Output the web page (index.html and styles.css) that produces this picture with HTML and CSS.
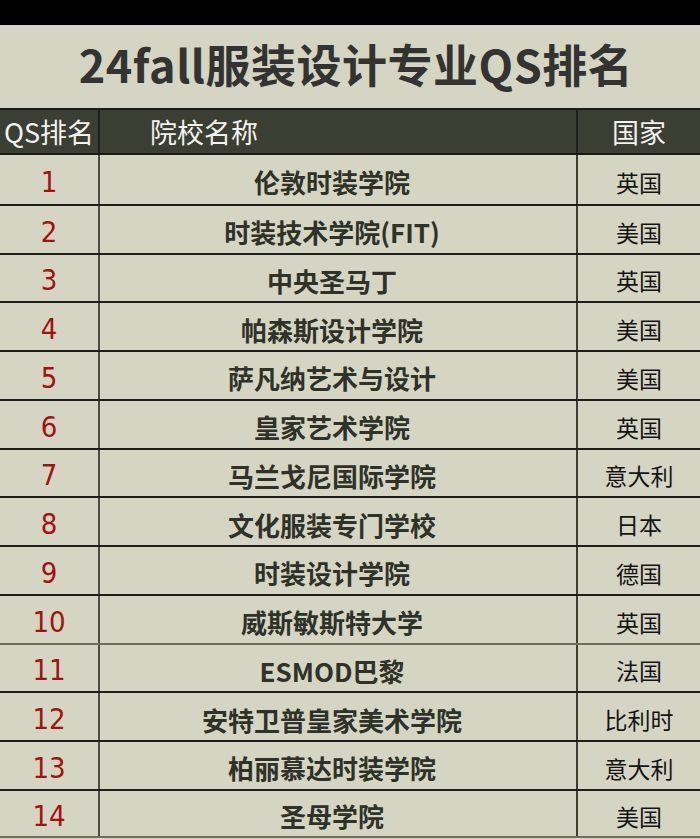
FILE: index.html
```html
<!DOCTYPE html>
<html lang="zh">
<head>
<meta charset="utf-8">
<link rel="stylesheet" href="styles.css">
</head>
<body>
<div class="page">
  <div class="topbar"></div>
  <h1 class="title">24fall服装设计专业QS排名</h1>
  <div class="table">
    <div class="row head">
      <div class="c rank">QS排名</div>
      <div class="c name">院校名称</div>
      <div class="c country">国家</div>
    </div>
    <div class="row"><div class="c rank">1</div><div class="c name">伦敦时装学院</div><div class="c country">英国</div></div>
    <div class="row"><div class="c rank">2</div><div class="c name">时装技术学院(FIT)</div><div class="c country">美国</div></div>
    <div class="row"><div class="c rank">3</div><div class="c name">中央圣马丁</div><div class="c country">英国</div></div>
    <div class="row"><div class="c rank">4</div><div class="c name">帕森斯设计学院</div><div class="c country">美国</div></div>
    <div class="row"><div class="c rank">5</div><div class="c name">萨凡纳艺术与设计</div><div class="c country">美国</div></div>
    <div class="row"><div class="c rank">6</div><div class="c name">皇家艺术学院</div><div class="c country">英国</div></div>
    <div class="row"><div class="c rank">7</div><div class="c name">马兰戈尼国际学院</div><div class="c country">意大利</div></div>
    <div class="row"><div class="c rank">8</div><div class="c name">文化服装专门学校</div><div class="c country">日本</div></div>
    <div class="row"><div class="c rank">9</div><div class="c name">时装设计学院</div><div class="c country">德国</div></div>
    <div class="row"><div class="c rank">10</div><div class="c name">威斯敏斯特大学</div><div class="c country">英国</div></div>
    <div class="row grey"><div class="c rank">11</div><div class="c name">ESMOD巴黎</div><div class="c country">法国</div></div>
    <div class="row"><div class="c rank">12</div><div class="c name">安特卫普皇家美术学院</div><div class="c country">比利时</div></div>
    <div class="row"><div class="c rank">13</div><div class="c name">柏丽慕达时装学院</div><div class="c country">意大利</div></div>
    <div class="row last"><div class="c rank">14</div><div class="c name">圣母学院</div><div class="c country">美国</div></div>
  </div>
</div>
</body>
</html>
```

FILE: styles.css
```css
html, body {
  margin: 0;
  padding: 0;
  background: #d4d6c3;
}
.page {
  width: 700px;
  height: 839px;
  overflow: hidden;
  background: #d4d6c3;
  font-family: "Noto Sans CJK SC", "Noto Sans", sans-serif;
}
.topbar {
  height: 25px;
  background: #000;
}
.title {
  margin: 0;
  height: 83px;
  display: flex;
  align-items: center;
  justify-content: center;
  padding-left: 12px;
  padding-bottom: 6px;
  box-sizing: border-box;
  font-size: 45px;
  font-weight: 700;
  color: #333331;
  letter-spacing: 0.5px;
}
.table {
  display: flex;
  flex-direction: column;
}
.row {
  display: grid;
  grid-template-columns: 100px 478px 122px;
  height: 48.75px;
  box-sizing: border-box;
  border-top: 2px solid #1e1f1a;
}
.row.grey {
  border-top-color: #6c6f60;
}
.row.last {
  border-bottom: 2px solid #6c6f60;
}
.c {
  display: flex;
  align-items: center;
  justify-content: center;
  padding-top: 5px;
  box-sizing: border-box;
}
.rank {
  border-right: 2px solid #4c4e46;
  color: #a3110f;
  font-family: "DejaVu Sans Condensed", "DejaVu Sans", sans-serif;
  font-size: 29px;
}
.name {
  color: #2f3228;
  font-size: 26px;
  font-weight: 700;
  padding-right: 12px;
  border-right: 2px solid #3c3e36;
}
.country {
  color: #141414;
  font-size: 23px;
}
.row.head {
  height: 47px;
  background: #3b3e33;
  border-top: 2px solid #1a1b17;
  border-bottom: 2px solid #1a1b17;
}
.row.head + .row {
  border-top: none;
}
.head .c {
  color: #f2f2ee;
  font-family: "Noto Sans CJK SC", sans-serif;
  font-size: 27px;
  font-weight: 400;
  padding-top: 0;
}
.head .rank {
  border-right-color: #1f201b;
}
.head .name {
  justify-content: flex-start;
  padding-left: 50px;
  border-right-color: #1f201b;
}
```
